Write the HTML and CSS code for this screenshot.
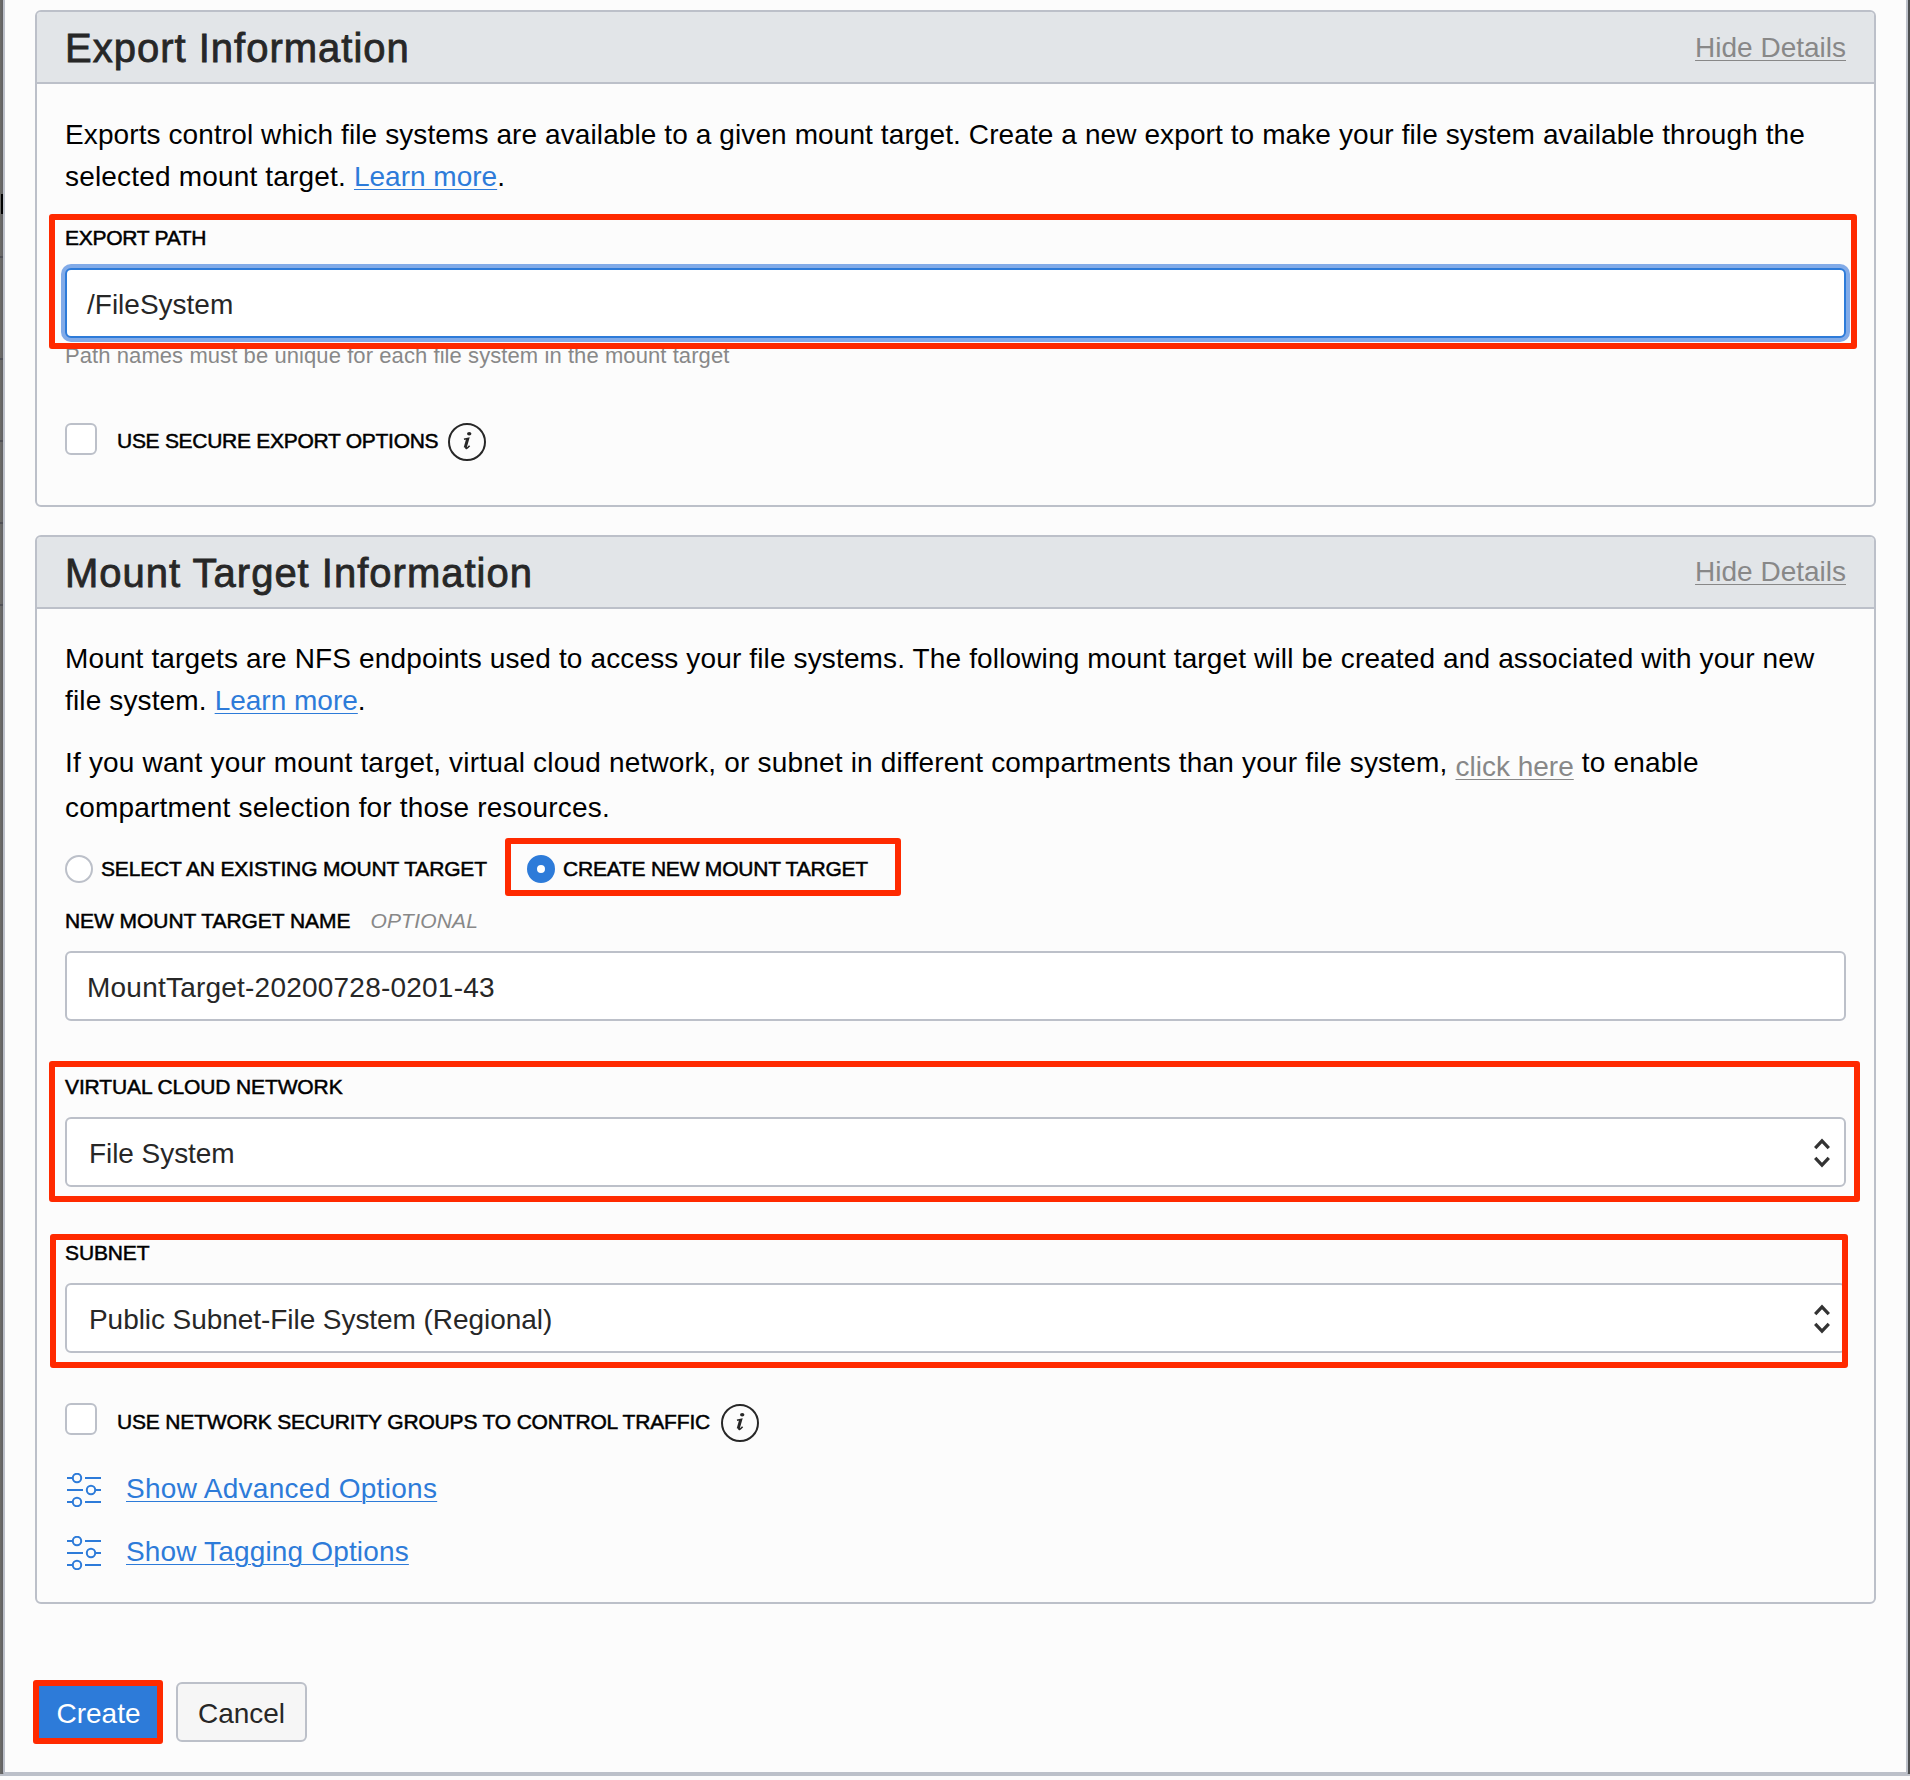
FILE: index.html
```html
<!DOCTYPE html>
<html lang="en">
<head>
<meta charset="utf-8">
<title>Create File System</title>
<link rel="stylesheet" href="styles.css">
</head>
<body>
<svg width="0" height="0" class="defs" aria-hidden="true">
  <symbol id="sliders" viewBox="0 0 34 34">
    <g fill="none" stroke="currentColor" stroke-width="2">
      <path d="M0 5h5M18 5h16M0 17h16M29 17h5M0 29h5M18 29h16"/>
      <circle cx="10" cy="5" r="4.2"/><circle cx="24" cy="17" r="4.2"/><circle cx="10" cy="29" r="4.2"/>
    </g>
  </symbol>
  <symbol id="updown" viewBox="0 0 16 30">
    <path d="M1.2 10.2L8 2.8l6.800 7.400M1.200 19.800L8 27.200l6.800-7.400" fill="none" stroke="#333" stroke-width="3.200"/>
  </symbol>
  <symbol id="info" viewBox="0 0 38 38">
    <circle cx="19" cy="19" r="18" fill="none" stroke="#272727" stroke-width="2"/>
    <ellipse cx="21.200" cy="10.800" rx="2.200" ry="1.700" fill="#272727"/>
    <path d="M16 16.300C18 15.700 19.400 15.400 20.600 15.200L18 24.200C17.600 26 18.600 26 21.600 22.800" fill="none" stroke="#272727" stroke-width="1.600"/>
    <path d="M19.300 15.800L16.800 24.600" stroke="#272727" stroke-width="2.200" fill="none"/>
  </symbol>
</svg>
<div class="page">
  <div class="backdrop left">
    <i class="mark"></i>
    <i class="tick t1"></i><i class="tick t2"></i><i class="tick t3"></i><i class="tick t4"></i><i class="tick t5"></i>
  </div>
  <main class="modal">
    <section class="panel">
      <header class="head"><h2>Export Information</h2><a class="toggle" href="#">Hide Details</a></header>
      <div class="content export">
        <p class="para p1">Exports control which file systems are available to a given mount target. Create a new export to make your file system available through the<br><span class="wide">selected mount target. </span><a href="#">Learn more</a>.</p>
        <div class="field path">
          <div class="label tight">EXPORT PATH</div>
          <div class="input focus">/FileSystem</div>
          <span class="mark-box mb-path"></span>
        </div>
        <div class="hint">Path names must be unique for each file system in the mount target</div>
        <div class="check">
          <span class="box"></span><span class="label tight">USE SECURE EXPORT OPTIONS</span><svg class="info"><use href="#info"/></svg>
        </div>
      </div>
    </section>

    <section class="panel">
      <header class="head second"><h2>Mount Target Information</h2><a class="toggle" href="#">Hide Details</a></header>
      <div class="content mount">
        <p class="para p2">Mount targets are NFS endpoints used to access your file systems. The following mount target will be created and associated with your new<br>file system. <a href="#">Learn more</a>.</p>
        <p class="para p3">If you want your mount target, virtual cloud network, or subnet in different compartments than your file system, <a class="muted" href="#">click here</a> to enable<br>compartment selection for those resources.</p>
        <div class="radios">
          <div class="option first"><span class="radio"></span><span class="label">SELECT AN EXISTING MOUNT TARGET</span></div>
          <div class="option"><span class="radio on"></span><span class="label create">CREATE NEW MOUNT TARGET</span><span class="mark-box mb-radio"></span></div>
        </div>
        <div class="field name">
          <div class="label">NEW MOUNT TARGET NAME<em>OPTIONAL</em></div>
          <div class="input code">MountTarget-20200728-0201-43</div>
        </div>
        <div class="field">
          <div class="label">VIRTUAL CLOUD NETWORK</div>
          <div class="input select">File System<svg class="updown"><use href="#updown"/></svg></div>
          <span class="mark-box mb-vcn"></span>
        </div>
        <div class="field">
          <div class="label">SUBNET</div>
          <div class="input select">Public Subnet-File System (Regional)<svg class="updown"><use href="#updown"/></svg></div>
          <span class="mark-box mb-subnet"></span>
        </div>
        <div class="check nsg">
          <span class="box"></span><span class="label">USE NETWORK SECURITY GROUPS TO CONTROL TRAFFIC</span><svg class="info"><use href="#info"/></svg>
        </div>
        <div class="more advanced"><svg class="sliders"><use href="#sliders"/></svg><a href="#">Show Advanced Options</a></div>
        <div class="more tagging"><svg class="sliders"><use href="#sliders"/></svg><a href="#">Show Tagging Options</a></div>
      </div>
    </section>

    <footer class="actions">
      <div class="btn primary">Create<span class="mark-box mb-create"></span></div>
      <div class="btn">Cancel</div>
    </footer>
  </main>
  <div class="backdrop right"></div>
</div>
</body>
</html>
```
FILE: styles.css
```css
* { box-sizing: border-box; }
body {
  margin: 0;
  background: #fcfcfc;
  color: #000;
  font: 28px/42px "Liberation Sans", Arial, sans-serif;
}
.defs { position: absolute; }
h2, p { margin: 0; font-weight: 400; }
a {
  color: #2d7bd9;
  text-decoration: underline;
  text-decoration-thickness: 1px;
  text-underline-offset: 3px;
}

.page {
  display: flex;
  height: 1776px;
  background: linear-gradient(#4c4e50, #4c4e50) 0 0 / 100% 1774px no-repeat, #bcc0c9;
}
.backdrop { position: relative; height: 1774px; }
.left { width: 3px; background: linear-gradient(90deg, #6e6d69, #606062); }
.right { width: 2px; background: #4c4e50; }
.mark { position: absolute; left: 1px; top: 194px; width: 2px; height: 20px; background: #000; }
.tick { position: absolute; left: 0; width: 3px; height: 2px; background: #505055; }
.t1 { top: 256px; }
.t2 { top: 358px; }
.t3 { top: 440px; }
.t4 { top: 522px; }
.t5 { top: 604px; }

.modal {
  flex: 1;
  padding: 10px 30px 0;
  background: #fcfcfc;
  border: solid #bcc0c9;
  border-width: 0 2px 4px;
  border-radius: 0 0 4px 4px;
}

.panel { border: 2px solid #bcc0c9; border-radius: 6px; margin-bottom: 28px; }
.head {
  display: flex;
  justify-content: space-between;
  height: 72px;
  padding: 0 28px;
  background: #e2e5e8;
  border-bottom: 2px solid #bcc0c9;
  border-radius: 4px 4px 0 0;
}
.head h2 {
  font-size: 40px;
  line-height: 72px;
  letter-spacing: 1px;
  color: #272727;
  -webkit-text-stroke: .8px #272727;
}
.toggle { color: #888; line-height: 71px; }
.second .toggle { line-height: 69px; }

.content { padding: 29px 28px; }
.export { padding-top: 30px; padding-bottom: 44px; }
.para { white-space: nowrap; }
.para a { letter-spacing: 0; }
.p1 { letter-spacing: .1px; }
.wide { letter-spacing: .18px; }
.p2 { letter-spacing: .14px; }
.p3 { margin-top: 18px; line-height: 45px; letter-spacing: .19px; }
.muted { color: #888; line-height: 1; vertical-align: -4px; }

.label {
  font-size: 21px;
  line-height: 30px;
  letter-spacing: -.12px;
  white-space: nowrap;
  -webkit-text-stroke: .5px #000;
}
.tight { letter-spacing: -.28px; }
.name .label { letter-spacing: -.06px; }
.label em { margin-left: 20px; color: #888; letter-spacing: .2px; -webkit-text-stroke: 0; }

.field { position: relative; margin-top: 51px; }
.path { margin-top: 25px; }
.name { margin-top: 23px; }
.input {
  display: flex;
  align-items: center;
  height: 70px;
  margin-top: 15px;
  padding: 3px 16px 0 20px;
  color: #272727;
  background: #fff;
  border: 2px solid #bcc0c9;
  border-radius: 6px;
}
.focus { border-color: #2d7bd9; box-shadow: 0 0 0 4px #82abe8; }
.code { letter-spacing: .22px; }
.select { justify-content: space-between; padding: 4px 14px 0 22px; letter-spacing: -.06px; }
.updown { width: 16px; height: 30px; margin-top: -2px; }
.hint { margin-top: 3px; font-size: 22px; line-height: 30px; letter-spacing: .08px; color: #888; }

.check { display: flex; align-items: flex-start; margin-top: 52px; }
.box { width: 32px; height: 32px; margin-right: 20px; background: #fff; border: 2px solid #bcc0c9; border-radius: 6px; }
.check .label { margin-top: 3px; }
.info { width: 38px; height: 38px; margin-left: 10px; }
.nsg { margin-top: 50px; }
.nsg .label { margin-top: 4px; letter-spacing: -.17px; }
.nsg .info { margin-top: 1px; margin-left: 11px; }

.radios { display: flex; margin-top: 25px; }
.option { position: relative; display: flex; gap: 8px; }
.first { min-width: 462px; }
.option .label { line-height: 28px; letter-spacing: -.15px; }
.option .create { letter-spacing: -.22px; }
.radio { width: 28px; height: 28px; background: #fff; border: 2px solid #bcc0c9; border-radius: 50%; }
.on { border: 10px solid #2d7bd9; }

.more { display: flex; align-items: center; }
.more a { letter-spacing: .29px; }
.advanced { margin-top: 26px; }
.tagging { margin-top: 21px; }
.tagging a { letter-spacing: .16px; }
.sliders { width: 34px; height: 34px; margin: 2px 25px 0 2px; color: #2d7bd9; }

.actions { display: flex; gap: 15px; margin-top: 78px; }
.btn {
  position: relative;
  width: 131px;
  height: 60px;
  padding-top: 2px;
  line-height: 56px;
  text-align: center;
  color: #272727;
  background: #f6f6f6;
  border: 2px solid #bcc0c9;
  border-radius: 6px;
}
.primary { width: 126px; padding: 4px 0 0 1px; border: 0; color: #fff; background: #2d7bd9; }

/* Red call-out frames drawn over the form */
.mark-box { position: absolute; border: 6px solid #ff2a00; border-radius: 3px; }
.mb-path { left: -16px; top: -9px; width: 1808px; height: 135px; }
.mb-radio { left: -22px; top: -17px; width: 396px; height: 58px; }
.mb-vcn { left: -16px; top: -11px; width: 1811px; height: 141px; }
.mb-subnet { left: -15px; top: -4px; width: 1798px; height: 134px; }
.mb-create { left: -2px; top: -2px; width: 130px; height: 64px; }
```
